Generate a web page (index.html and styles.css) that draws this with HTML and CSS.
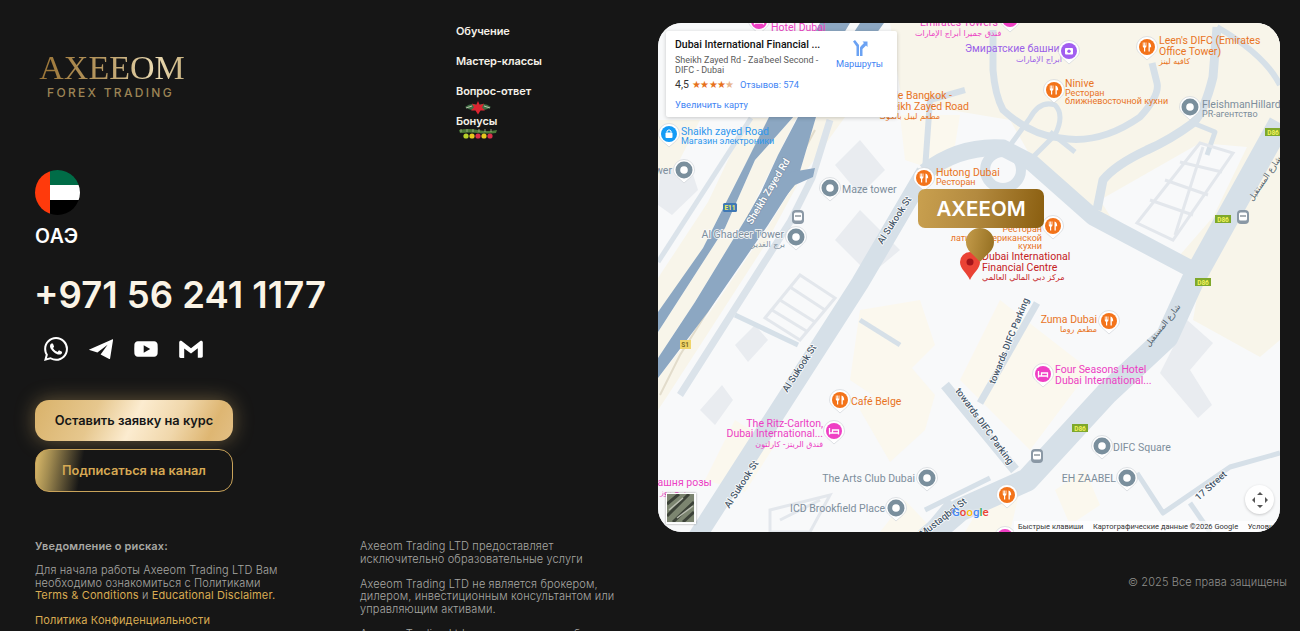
FILE: index.html
```html
<!DOCTYPE html>
<html lang="ru">
  <head>
    <meta charset="UTF-8" />
    <meta name="viewport" content="width=device-width, initial-scale=1.0" />
    <title>Axeeom Forex Trading</title>
    <link rel="stylesheet" href="styles.css">
  </head>
  <body>
    <footer class="site-footer">
      <div class="top-row">
        <!-- Contacts -->
        <section class="contacts">
          <div class="logo">
            <span class="logo-name">AXEEOM</span>
            <span class="logo-sub">FOREX TRADING</span>
          </div>
          <svg class="flag" width="45" height="45" viewBox="0 0 45 45">
            <defs><clipPath id="flagClip"><circle cx="22.5" cy="22.5" r="22.5"/></clipPath></defs>
            <g clip-path="url(#flagClip)">
              <rect x="15" y="0" width="30" height="15" fill="#006c47"/>
              <rect x="15" y="15" width="30" height="15" fill="#fff"/>
              <rect x="15" y="30" width="30" height="15" fill="#000"/>
              <rect x="0" y="0" width="15" height="45" fill="#ff3a0c"/>
            </g>
          </svg>
          <div class="country">ОАЭ</div>
          <a class="phone">+971 56 241 1177</a>
          <div class="socials">
            <svg width="24" height="24" viewBox="0 0 24 24" fill="#fff"><path d="M17.472 14.382c-.297-.149-1.758-.867-2.03-.967-.273-.099-.471-.148-.67.15-.197.297-.767.966-.94 1.164-.173.199-.347.223-.644.075-.297-.15-1.255-.463-2.39-1.475-.883-.788-1.48-1.761-1.653-2.059-.173-.297-.018-.458.13-.606.134-.133.298-.347.446-.52.149-.174.198-.298.298-.497.099-.198.05-.371-.025-.52-.075-.149-.669-1.612-.916-2.207-.242-.579-.487-.5-.669-.51-.173-.008-.371-.01-.57-.01-.198 0-.52.074-.792.372-.272.297-1.04 1.016-1.04 2.479 0 1.462 1.065 2.875 1.213 3.074.149.198 2.096 3.2 5.077 4.487.709.306 1.262.489 1.694.625.712.227 1.36.195 1.871.118.571-.085 1.758-.719 2.006-1.413.248-.694.248-1.289.173-1.413-.074-.124-.272-.198-.57-.347m-5.421 7.403h-.004a9.87 9.87 0 01-5.031-1.378l-.361-.214-3.741.982.998-3.648-.235-.374a9.86 9.86 0 01-1.51-5.26c.001-5.45 4.436-9.884 9.888-9.884 2.64 0 5.122 1.03 6.988 2.898a9.825 9.825 0 012.893 6.994c-.003 5.45-4.437 9.884-9.885 9.884m8.413-18.297A11.815 11.815 0 0012.05 0C5.495 0 .16 5.335.157 11.892c0 2.096.547 4.142 1.588 5.945L.057 24l6.305-1.654a11.882 11.882 0 005.683 1.448h.005c6.554 0 11.89-5.335 11.893-11.893a11.821 11.821 0 00-3.48-8.413z"/></svg>
            <svg width="24" height="24" viewBox="0 0 24 24" fill="#fff"><path d="M.4 12.6 23.6 2.2c.3-.1.5.1.5.4l-3 18.9c-.1.5-.5.6-.9.4l-8.6-4.4 7-9.8-10.2 7.8-7.9-2.500c-.4-.1-.5-.3-.1-.4z"/></svg>
            <svg width="24" height="24" viewBox="0 0 24 24" fill="#fff"><path fill-rule="evenodd" d="M3.8 4.2h16.4c1.8 0 3.3 1.4 3.4 3.2.2 3 .2 6.200 0 9.200-.1 1.800-1.600 3.200-3.400 3.200H3.800c-1.800 0-3.300-1.400-3.400-3.200-.2-3-.2-6.200 0-9.200.1-1.800 1.600-3.200 3.400-3.200zM9.700 8.200v7.600l6.500-3.800z"/></svg>
            <svg width="24" height="24" viewBox="0 0 24 24" fill="#fff"><path d="M.2 5.300C.2 4 1.700 3.300 2.700 4.100L12 11.200l9.300-7.100c1-.8 2.500-.1 2.500 1.200v14c0 .8-.6 1.400-1.400 1.400h-3.600v-9.400L12 16.600 5.200 11.500v9.400H1.600c-.8 0-1.400-.6-1.400-1.400z"/></svg>
          </div>
          <div class="buttons">
            <a class="btn btn-primary">Оставить заявку на курс</a>
            <a class="btn btn-outline">Подписаться на канал</a>
          </div>
        </section>

        <!-- Navigation -->
        <nav class="nav">
          <a>Обучение</a>
          <a>Мастер-классы</a>
          <a>Вопрос-ответ</a>
          <a class="nav-bonus">
            <svg class="deco-top" width="26" height="14" viewBox="0 0 26 14">
              <path d="M0 6 Q6 1 13 4 Q20 1 26 6 Q20 11 13 8 Q6 11 0 6Z" fill="#3f6f45"/>
              <path d="M1 7 7 5M25 7 19 5" stroke="#d9d3c4" stroke-width=".8"/>
              <path d="M13 0 14.800 4 19 2.500 17 6.500 20 9.500 15.500 9.500 13 13.500 10.500 9.500 6 9.500 9 6.500 7 2.500 11.200 4Z" fill="#dc2430"/>
            </svg>
            Бонусы
            <svg class="deco-bottom" width="40" height="12" viewBox="0 0 40 12">
              <path d="M1 2 Q10 0 20 2 T39 2 L38 5 Q28 6 20 5 T2 5Z" fill="#4c7a3a"/>
              <path d="M3 1V4M9 1V4M15 1V4M21 1V4M27 1V4M33 1V4" stroke="#a8b98a" stroke-width=".8"/>
              <circle cx="8" cy="8" r="2.600" fill="#b7d12a"/>
              <circle cx="14" cy="8" r="2.600" fill="#e6c81e"/>
              <circle cx="20" cy="8" r="2.600" fill="#d9304a"/>
              <circle cx="26" cy="8" r="2.600" fill="#e6c81e"/>
              <circle cx="32" cy="8" r="2.600" fill="#d9304a"/>
            </svg>
          </a>
        </nav>

        <!-- Map -->
        <div class="map">
          <svg class="map-canvas" width="622" height="509" viewBox="658 23 622 509">
            <defs>
              <g id="pin-shape">
                <path d="M-10.500 0a10.500 10.500 0 0 1 21 0c0 5-5 8-10.500 13C-5 8-10.500 5-10.500 0z" fill="#fff" stroke="#c9cfd4" stroke-width=".6"/>
              </g>
              <g id="pin-food">
                <use href="#pin-shape"/><circle r="8" fill="#f3731a"/>
                <path d="M-4.200-4.500h.8v3h.6v-3h.8v3h.6v-3h.8v4q0 1-1.200 1.300V4.500h-1.200V.8Q-4.200.5-4.200-.5zM1.500-4.500q2.700.8 2.700 4.800H2.800v4.200H1.500z" fill="#fff"/>
              </g>
              <g id="pin-hotel">
                <use href="#pin-shape"/><circle r="8" fill="#ef3fc4"/>
                <path d="M-4.500-3V3.500M-4.500 2H4.500V3.500M4.500 2V-1H-1.500V2" fill="none" stroke="#fff" stroke-width="1.300"/>
              </g>
              <g id="pin-grey">
                <use href="#pin-shape"/><circle r="8.500" fill="#7a8f9d"/><circle r="3.800" fill="#fff"/>
              </g>
              <g id="pin-photo">
                <use href="#pin-shape"/><circle r="8" fill="#a15ef0"/><rect x="-4" y="-3" width="8" height="6.500" rx="1" fill="#fff"/><circle cy=".3" r="1.700" fill="#a15ef0"/>
              </g>
              <g id="pin-shop">
                <use href="#pin-shape"/><circle r="8" fill="#149bf5"/><rect x="-3.500" y="-1.500" width="7" height="5.500" rx="1" fill="#fff"/><path d="M-2-1.500V-3q2-2.500 4 0v1.500" fill="none" stroke="#fff"/>
              </g>
              <g id="metro">
                <rect x="-6" y="-7" width="12" height="14" rx="4" fill="#8a98a5"/>
                <rect x="-4" y="-4.500" width="8" height="8" rx="1.500" fill="#fff"/>
                <rect x="-3" y="-1.500" width="6" height="1" fill="#56646f"/>
              </g>
              <g id="shield-d86">
                <rect x="-8" y="-4" width="16" height="8" fill="#7fa82b"/>
                <text class="shield-text" text-anchor="middle" y="2.500">D86</text>
              </g>
            </defs>

            <rect x="658" y="23" width="622" height="509" fill="#f8f9fa"/>

            <!-- Land areas -->
            <path class="beige" d="M890 23H1280V125L1220 222 1200 280 1125 240 1050 190 1010 120 950 110 900 90Z"/>
            <path class="white-land" d="M1100 200 1200 143 1247 147 1213 217 1173 263 1117 227Z"/>
            <path class="beige" d="M1280 145 1227 220 1200 280 1193 320 1260 357 1280 340Z"/>
            <path class="beige" d="M658 278 708 202 748 118 771 118 745 165 703 248 658 315Z"/>
            <path class="beige" d="M658 332 725 228 755 160 795 115 798 115 778 155 748 215 695 302 658 358Z"/>
            <path class="beige" d="M658 378 708 315 768 227 798 178 816 117 845 117 801 178 765 245 668 395 658 410Z"/>
            <path class="beige" d="M658 120H700L672 175 658 180Z"/>
            <path class="beige-pale" d="M860 310 920 300 935 345 880 400 850 380Z"/>
            <path class="beige-pale" d="M860 410 905 360 935 395 925 430 890 462Z"/>
            <path class="beige-pale" d="M1000 300 1090 370 1030 450 960 380Z"/>
            <path class="beige-pale" d="M775 445 735 420 705 480 745 492Z"/>
            <path class="beige-pale" d="M900 115H960L950 175 905 160Z"/>
            <path class="beige-pale" d="M1055 490 1085 470 1100 505 1070 525ZM880 532 905 500 935 532ZM965 532 990 490 1020 490 1010 532Z"/>
            <path class="grey-block" d="M860 140 885 170 860 195 835 165ZM860 210 900 250 870 275 835 240Z"/>
            <path class="grey-block" d="M1187 320 1213 343 1190 370 1212 405 1198 418 1160 373Z"/>
            <path class="grey-block" d="M735 345 755 325 768 340 748 362ZM700 410 722 385 733 400 715 425Z"/>
            <path class="grey-block" d="M660 170 690 165 698 190 672 215 658 205Z"/>

            <!-- Pale roads -->
            <g class="road-pale">
              <path d="M658 262 751 118" stroke-width="5"/>
              <path d="M680 395 790 222 812 178 830 120" stroke-width="7"/>
            </g>
            <path class="rail" d="M815 130 775 205 680 355 660 395"/>

            <!-- Highway -->
            <path class="highway" d="M658 312 703 248 745 165 770 115 820 23H850L795 115 755 160 725 228 658 332Z"/>
            <path class="highway" d="M658 358 695 302 748 215 761 192 778 155 798 117 860 23H884L816 117 798 178 768 225 708 312 658 378Z"/>
            <path class="highway" d="M775 190 791 172 815 168 813 177 795 185 781 202Z"/>

            <!-- Roads -->
            <g class="road">
              <path d="M695 540 860 283 925 172" stroke-width="18"/>
              <path d="M1280 123 1193 280 1167 337 1107 393 1027 480 960 510 925 540" stroke-width="23"/>
              <path d="M925 172 Q960 145 1003 148 L1032 163 1093 217 1193 270" stroke-width="17"/>
              <circle cx="1003" cy="170" r="18" stroke-width="10"/>
              <path d="M1217 27 1213 77Q1205 110 1193 123 1170 140 1147 150 1115 165 1103 180L1097 210" stroke-width="9"/>
              <path d="M993 30 993 70 Q995 95 1003 110 1030 135 1060 138 1100 145 1140 117 1160 95 1157 83L1152 63" stroke-width="7"/>
              <path d="M1003 155 1030 118 Q1040 100 1055 105 1065 115 1055 135L1025 165M1050 132 1075 152" stroke-width="5"/>
              <path d="M1217 27Q1265 55 1280 85" stroke-width="6"/>
              <path d="M1193 123 1215 132 1207 155" stroke-width="5"/>
              <path d="M965 90 930 100 925 170" stroke-width="6"/>
              <path d="M1037 303 980 403" stroke-width="7"/>
              <path d="M945 385 1015 470" stroke-width="10"/>
              <path d="M1137 473 1163 513 1230 467 1280 453" stroke-width="5"/>
              <path d="M1190 503 1210 532" stroke-width="5"/>
              <path d="M735 315 798 345" stroke-width="5"/>
              <path d="M860 320 900 345" stroke-width="5"/>
              <path d="M950 500 925 530M925 510 990 478" stroke-width="5"/>
            </g>

            <!-- Parking lots -->
            <g class="parking">
              <path d="M1137 223 1200 143 1233 153 1173 240Z"/>
              <path d="M1150 200 1193 215M1165 180 1208 195M1180 162 1222 172M1203 147 1175 235"/>
              <path d="M800 275 835 298 800 340 765 318Z"/>
              <path d="M790 287 825 310M780 300 815 322M772 310 808 332"/>
              <path d="M770 510 830 495 810 532 770 532Z"/>
              <path d="M780 520 820 500"/>
            </g>

            <!-- Labels -->
            <use href="#pin-hotel" x="759" y="21"/>
            <text class="lb pink" x="771" y="31">Hotel Dubai</text>
            <text class="lb pink" x="920" y="26">Emirates Towers</text>
            <text class="lb-ar pink" x="915" y="36">فندق جميرا أبراج الإمارات</text>
            <use href="#pin-hotel" x="1010" y="19"/>
            <text class="lb purple" x="965" y="52">Эмиратские башни</text>
            <text class="lb-ar purple" x="1016" y="62">أبراج الإمارات</text>
            <use href="#pin-photo" x="1069" y="51"/>

            <use href="#pin-food" x="1147" y="47"/>
            <text class="lb orange" x="1159" y="44">Leen's DIFC (Emirates</text>
            <text class="lb orange" x="1159" y="55">Office Tower)</text>
            <text class="lb-ar orange" x="1159" y="64">كافيه لينز</text>

            <use href="#pin-food" x="1054" y="90"/>
            <text class="lb orange" x="1065" y="87">Ninive</text>
            <text class="lb-sm orange" x="1065" y="96">Ресторан</text>
            <text class="lb-sm orange" x="1065" y="104">ближневосточной кухни</text>

            <use href="#pin-grey" x="1190" y="107"/>
            <text class="lb grey" x="1202" y="108">FleishmanHillard</text>
            <text class="lb-sm grey" x="1202" y="117">PR-агентство</text>

            <text class="lb orange end" x="952" y="99">Table Bangkok -</text>
            <text class="lb orange end" x="969" y="110">Sheikh Zayed Road</text>
            <text class="lb-ar orange end" x="940" y="119">مطعم ليبل بانكوك</text>

            <use href="#pin-shop" x="669" y="134"/>
            <text class="lb blue" x="681" y="135">Shaikh zayed Road</text>
            <text class="lb-sm blue" x="681" y="144">Магазин электроники</text>

            <use href="#pin-grey" x="684" y="170"/>
            <text class="lb grey end" x="672" y="174">Tower</text>
            <use href="#pin-grey" x="830" y="188"/>
            <text class="lb grey" x="842" y="193">Maze tower</text>
            <text class="lb grey end halo" x="784" y="238">Al Ghadeer Tower</text>
            <text class="lb-ar grey end" x="785" y="247">برج الغدير</text>
            <use href="#pin-grey" x="796" y="237"/>
            <use href="#metro" x="798" y="217"/>
            <rect x="723" y="203" width="14" height="9" rx="1.500" fill="#3f78b5"/>
            <text class="shield-text" x="730" y="210" text-anchor="middle">E11</text>

            <use href="#pin-food" x="924" y="178"/>
            <text class="lb orange" x="936" y="176">Hutong Dubai</text>
            <text class="lb-sm orange" x="936" y="185">Ресторан</text>

            <text class="lb-sm orange end" x="1042" y="232">Ресторан</text>
            <text class="lb-sm orange end" x="1042" y="241">латиноамериканской</text>
            <text class="lb-sm orange end" x="1042" y="249">кухни</text>
            <use href="#pin-food" x="1053" y="226"/>

            <text class="lb red" x="982" y="260">Dubai International</text>
            <text class="lb red" x="982" y="271">Financial Centre</text>
            <text class="lb-ar red" x="982" y="280">مركز دبي المالي العالمي</text>

            <text class="road-name" transform="translate(897 222) rotate(-57)" text-anchor="middle">Al Sukook St</text>
            <text class="road-name" transform="translate(802 370) rotate(-57)" text-anchor="middle">Al Sukook St</text>
            <text class="road-name" transform="translate(744 486) rotate(-57)" text-anchor="middle">Al Sukook St</text>
            <text class="road-name white" transform="translate(771 193) rotate(-59)" text-anchor="middle">Sheikh Zayed Rd</text>
            <text class="road-name" transform="translate(1012 342) rotate(-68)" text-anchor="middle">towards DIFC Parking</text>
            <text class="road-name" transform="translate(982 428) rotate(54)" text-anchor="middle">towards DIFC Parking</text>
            <text class="road-name" transform="translate(1213 488) rotate(-42)" text-anchor="middle">17 Street</text>
            <text class="road-name" transform="translate(945 520) rotate(-38)" text-anchor="middle">Mustaqbal St</text>
            <text class="lb-ar dark" transform="translate(1267 180) rotate(-56)" text-anchor="middle">شارع المستقبل</text>
            <text class="lb-ar dark" transform="translate(1165 327) rotate(-52)" text-anchor="middle">شارع المستقبل</text>

            <use href="#shield-d86" x="1273" y="132"/>
            <use href="#shield-d86" x="1223" y="219"/>
            <use href="#shield-d86" x="1203" y="282"/>
            <use href="#shield-d86" x="1080" y="428"/>
            <use href="#metro" x="1243" y="217"/>
            <use href="#metro" x="1037" y="456"/>
            <rect x="680" y="340" width="11" height="9" fill="#f0d56a"/>
            <text class="shield-text shield-s1" x="685" y="347" text-anchor="middle">S1</text>

            <use href="#pin-food" x="1109" y="321"/>
            <text class="lb orange end" x="1097" y="323">Zuma Dubai</text>
            <text class="lb-ar orange end" x="1097" y="332">مطعم روما</text>
            <use href="#pin-hotel" x="1043" y="374"/>
            <text class="lb pink" x="1055" y="373">Four Seasons Hotel</text>
            <text class="lb pink" x="1055" y="384">Dubai International...</text>
            <use href="#pin-grey" x="1102" y="446"/>
            <text class="lb grey" x="1113" y="451">DIFC Square</text>
            <text class="lb grey end" x="1116" y="482">EH ZAABEL</text>
            <use href="#pin-grey" x="1127" y="478"/>

            <use href="#pin-food" x="840" y="400"/>
            <text class="lb orange" x="851" y="405">Café Belge</text>
            <use href="#pin-hotel" x="834" y="431"/>
            <text class="lb pink end" x="823" y="427">The Ritz-Carlton,</text>
            <text class="lb pink end" x="823" y="437">Dubai International...</text>
            <text class="lb-ar pink end" x="823" y="447">فندق الريتز- كارلتون</text>
            <text class="lb grey end" x="915" y="482">The Arts Club Dubai</text>
            <use href="#pin-grey" x="927" y="478"/>
            <text class="lb grey end" x="885" y="512">ICD Brookfield Place</text>
            <use href="#pin-grey" x="896" y="508"/>
            <text class="lb pink" x="651" y="486">Башня розы</text>
            <text class="lb-ar pink" x="660" y="495">برج روز</text>
            <use href="#pin-food" x="1007" y="495"/>
            <use href="#pin-hotel" x="1005" y="537"/>

            <!-- Red place pin -->
            <path d="M970 252a10 10 0 0 1 10 10c0 7-7 11-10 18-3-7-10-11-10-18a10 10 0 0 1 10-10z" fill="#ea4335"/>
            <circle cx="970" cy="262" r="3.500" fill="#a3141a"/>
          </svg>

          <!-- Brand marker -->
          <div class="marker">
            <span class="marker-box">AXEEOM</span>
            <span class="marker-drop"></span>
          </div>

          <!-- Place card -->
          <div class="place-card">
            <div class="place-info">
              <div class="place-title">Dubai International Financial ...</div>
              <div class="place-addr">Sheikh Zayed Rd - Zaa'beel Second - DIFC - Dubai</div>
              <div class="place-rating">
                <span class="rating-num">4,5</span>
                <span class="stars">★★★★<span class="star-half">★</span></span>
                <a class="reviews">Отзывов: 574</a>
              </div>
              <a class="place-link">Увеличить карту</a>
            </div>
            <div class="directions">
              <svg width="16" height="16" viewBox="0 0 16 16" fill="#6ba2f3"><path d="M1 1.500 3 0l4 5v11H4.500V6.500zM9 6l3-3-1.500-1.500H15.500V7L14 5.500 10.500 9v7H8V7.500z"/></svg>
              <span>Маршруты</span>
            </div>
          </div>

          <div class="map-thumb">
            <svg width="27" height="28" viewBox="0 0 27 28">
              <rect width="27" height="28" fill="#7c8570"/>
              <path d="M0 10 12 0M0 22 22 0M6 28 27 8M16 28 27 18" stroke="#3c4238" stroke-width="3"/>
              <path d="M2 16 16 4M10 24 26 12" stroke="#b9bdb0" stroke-width="1.500"/>
            </svg>
          </div>
          <div class="google-logo"><span class="g-b">G</span><span class="g-r">o</span><span class="g-y">o</span><span class="g-b">g</span><span class="g-g">l</span><span class="g-r">e</span></div>
          <button class="fullscreen">
            <svg width="18" height="18" viewBox="0 0 18 18" fill="#555"><path d="M9 1 12 4H6zM9 17 6 14H12zM1 9 4 6V12zM17 9 14 12V6z"/></svg>
          </button>
          <div class="attribution">
            <span>Быстрые клавиши</span>
            <span>Картографические данные ©2026 Google</span>
            <span>Условия</span>
          </div>
        </div>
      </div>

      <!-- Legal text -->
      <div class="bottom-row">
        <div class="legal legal-risk">
          <p class="legal-title">Уведомление о рисках:</p>
          <p>Для начала работы Axeeom Trading LTD Вам необходимо ознакомиться с Политиками <a>Terms &amp; Conditions</a> и <a>Educational Disclaimer.</a></p>
          <p><a>Политика Конфиденциальности</a></p>
        </div>
        <div class="legal legal-info">
          <p>Axeeom Trading LTD предоставляет исключительно образовательные услуги</p>
          <p>Axeeom Trading LTD не является брокером, дилером, инвестиционным консультантом или управляющим активами.</p>
          <p>Axeeom Trading Ltd не гарантирует прибыль</p>
        </div>
        <div class="copyright">© 2025 Все права защищены</div>
      </div>
    </footer>
  </body>
</html>
```

FILE: styles.css
```css
* { box-sizing: border-box; }
html, body { height: 100%; overflow: hidden; }
body {
  margin: 0;
  background: #161616;
  color: #fff;
  font-family: Inter, "Noto Sans", sans-serif;
}
a { color: inherit; text-decoration: none; }

.site-footer { height: 631px; overflow: hidden; }
.top-row { display: flex; padding: 23px 20px 0 35px; height: 532px; }

/* contacts */
.contacts { width: 421px; display: flex; flex-direction: column; align-items: flex-start; }
.logo { display: flex; flex-direction: column; align-items: center; width: 154px; margin-top: 28px; }
.logo-name {
  font-family: "Liberation Serif", serif;
  font-size: 34px;
  line-height: 34px;
  background: linear-gradient(90deg, #9a7436 0%, #b89a63 45%, #ecdcb4 80%, #c9b27f 100%);
  -webkit-background-clip: text;
  background-clip: text;
  color: transparent;
}
.logo-sub { font-size: 12px; font-weight: 500; letter-spacing: 2.3px; color: #9c8455; line-height: 13px; margin-top: 1px; margin-left: -3px; }
.flag { margin-top: 71px; }
.country { font-size: 19.500px; font-weight: 600; line-height: 24px; margin-top: 9px; letter-spacing: .5px; }
.phone { font-size: 36.500px; font-weight: 600; line-height: 46px; margin-top: 24px; margin-left: -1px; color: #fbf4e6; white-space: nowrap; }
.socials { display: flex; gap: 21px; margin: 19px 0 0 9px; }
.buttons { display: flex; flex-direction: column; gap: 8px; margin-top: 39px; width: 198px; }
.btn {
  display: flex;
  align-items: center;
  justify-content: center;
  border-radius: 14px;
  font-size: 12.800px;
  font-weight: 600;
}
.btn-primary {
  height: 41px;
  color: #161616;
  background: linear-gradient(115deg, #d9b26a 0%, #e6c78e 30%, #fcecd0 50%, #f0d7ab 70%, #deb672 88%, #e2bf85 100%);
  box-shadow: 0 0 20px rgba(224, 184, 110, 0.4);
}
.btn-outline {
  height: 43px;
  color: #d6a954;
  border: 1px solid #c9a35a;
  background: linear-gradient(100deg, #dcbb6a 0%, #a08a50 8%, #161616 24%);
}

/* nav */
.nav { width: 202px; display: flex; flex-direction: column; gap: 15px; padding-top: 1px; }
.nav a { font-size: 11px; font-weight: 600; letter-spacing: -.1px; line-height: 15px; color: #f5f1e8; position: relative; width: fit-content; }
.deco-top { position: absolute; left: 9px; top: -13px; }
.deco-bottom { position: absolute; left: 2px; top: 14px; }

/* map */
.map { position: relative; width: 622px; height: 509px; border-radius: 24px; overflow: hidden; background: #f8f9fa; font-family: Roboto, sans-serif; }
.map-canvas { display: block; }
.beige { fill: #f8f5ea; }
.beige-pale { fill: #fbf8ee; }
.white-land { fill: #f8f9fa; }
.grey-block { fill: #e9ecf0; }
.highway { fill: #8ca7c2; }
.rail { fill: none; stroke: #e2dccb; stroke-width: 2; }
.road { fill: none; stroke: #d6e0e8; stroke-linejoin: round; }
.road-pale { fill: none; stroke: #dbe3ea; }
.parking { fill: none; stroke: #e3e7ec; stroke-width: 3; }

.lb { font: 10.500px Roboto, "DejaVu Sans", sans-serif; }
.lb-sm { font: 9px Roboto, "DejaVu Sans", sans-serif; }
.lb-ar { font: 8px "DejaVu Sans", sans-serif; }
.end { text-anchor: end; }
.pink { fill: #ec3fc4; }
.purple { fill: #9a5fe8; }
.orange { fill: #e8741f; }
.grey { fill: #7d8e9c; }
.blue { fill: #2f97ee; }
.red { fill: #c5221f; }
.dark { fill: #4d5c69; }
.halo { paint-order: stroke; stroke: #f8f9fa; stroke-width: 1.500px; }
.road-name { font: 500 9.500px Roboto, sans-serif; fill: #47586a; paint-order: stroke; stroke: #fff; stroke-width: 1.500px; }
.road-name.white { fill: #fff; stroke: #7d93aa; font-size: 10px; }
.shield-text { font: 700 6.500px Roboto, sans-serif; fill: #f2f25a; }
.shield-s1 { fill: #7a6a20; }

.marker { position: absolute; left: 260px; top: 166px; width: 126px; display: flex; flex-direction: column; align-items: center; }
.marker-box {
  width: 100%;
  height: 39px;
  border-radius: 7px;
  background: linear-gradient(100deg, #c9a04f 0%, #b38a3f 45%, #8a5e0f 100%);
  color: #fff;
  font: 600 20.500px/39px Inter, sans-serif;
  text-align: center;
}
.marker-drop {
  width: 28px;
  height: 28px;
  margin-left: -2px;
  border-radius: 50% 50% 0 50%;
  background: linear-gradient(55deg, #c9a04f, #8f6a1c);
  transform: rotate(45deg);
}

.place-card {
  position: absolute;
  left: 8px;
  top: 8px;
  width: 231px;
  height: 86px;
  background: #fff;
  border-radius: 2px;
  box-shadow: 0 1px 4px rgba(0, 0, 0, 0.2);
  padding: 7px 9px;
  display: flex;
  color: #5b5b5b;
}
.place-info { width: 150px; flex: none; }
.place-title { font-size: 10.500px; font-weight: 500; color: #111; line-height: 13px; white-space: nowrap; }
.place-addr { font-size: 9px; line-height: 10px; margin-top: 4px; }
.place-rating { display: flex; align-items: center; font-size: 10.500px; margin-top: 3px; line-height: 13px; color: #333; }
.stars { font-size: 9.500px; color: #e7711b; margin-left: 3px; letter-spacing: -.6px; }
.star-half { color: #e9b48c; }
.reviews { color: #4285f4; font-size: 9.300px; margin-left: 6px; white-space: nowrap; }
.place-link { display: block; color: #4285f4; font-size: 9.300px; margin-top: 8px; }
.directions { flex: 1; display: flex; flex-direction: column; align-items: center; color: #4285f4; font-size: 9.300px; padding-top: 2px; margin-left: 6px; line-height: 12px; }
.directions svg { margin-bottom: 2px; }

.map-thumb { position: absolute; left: 8px; top: 470px; width: 30px; height: 31px; border: 1.500px solid #fff; box-shadow: 0 0 2px rgba(0, 0, 0, 0.4); }
.map-thumb svg { display: block; }
.google-logo { position: absolute; left: 294px; top: 482px; font: 500 11.500px Roboto, sans-serif; text-shadow: 0 0 2px #fff; }
.g-b { color: #4285f4; }
.g-r { color: #ea4335; }
.g-y { color: #fbbc05; }
.g-g { color: #34a853; }
.fullscreen { position: absolute; right: 6px; bottom: 18px; width: 29px; height: 29px; padding: 0; border: 0; border-radius: 50%; background: #fff; display: flex; align-items: center; justify-content: center; box-shadow: 0 1px 3px rgba(0, 0, 0, 0.2); }
.attribution {
  position: absolute;
  right: 0;
  bottom: 0;
  height: 11px;
  width: 266px;
  padding-left: 4px;
  display: flex;
  gap: 9.500px;
  white-space: nowrap;
  overflow: hidden;
  font-size: 7.500px;
  line-height: 11px;
  color: #333;
  background: rgba(255, 255, 255, 0.7);
}

/* legal */
.bottom-row { display: flex; padding: 8px 13px 0 35px; color: #a8a8a4; font-size: 11px; font-weight: 300; letter-spacing: .13px; line-height: 12.500px; }
.legal p { margin: 0 0 12.500px; }
.legal a { color: #d9ab52; font-weight: 400; }
.legal-risk { width: 325px; padding-right: 75px; }
.legal-info { width: 262px; }
.legal .legal-title { font-weight: 600; margin-bottom: 11.500px; }
.copyright { margin-left: auto; margin-top: 36px; font-size: 11px; letter-spacing: .1px; white-space: nowrap; color: #8f8f8c; }
```
